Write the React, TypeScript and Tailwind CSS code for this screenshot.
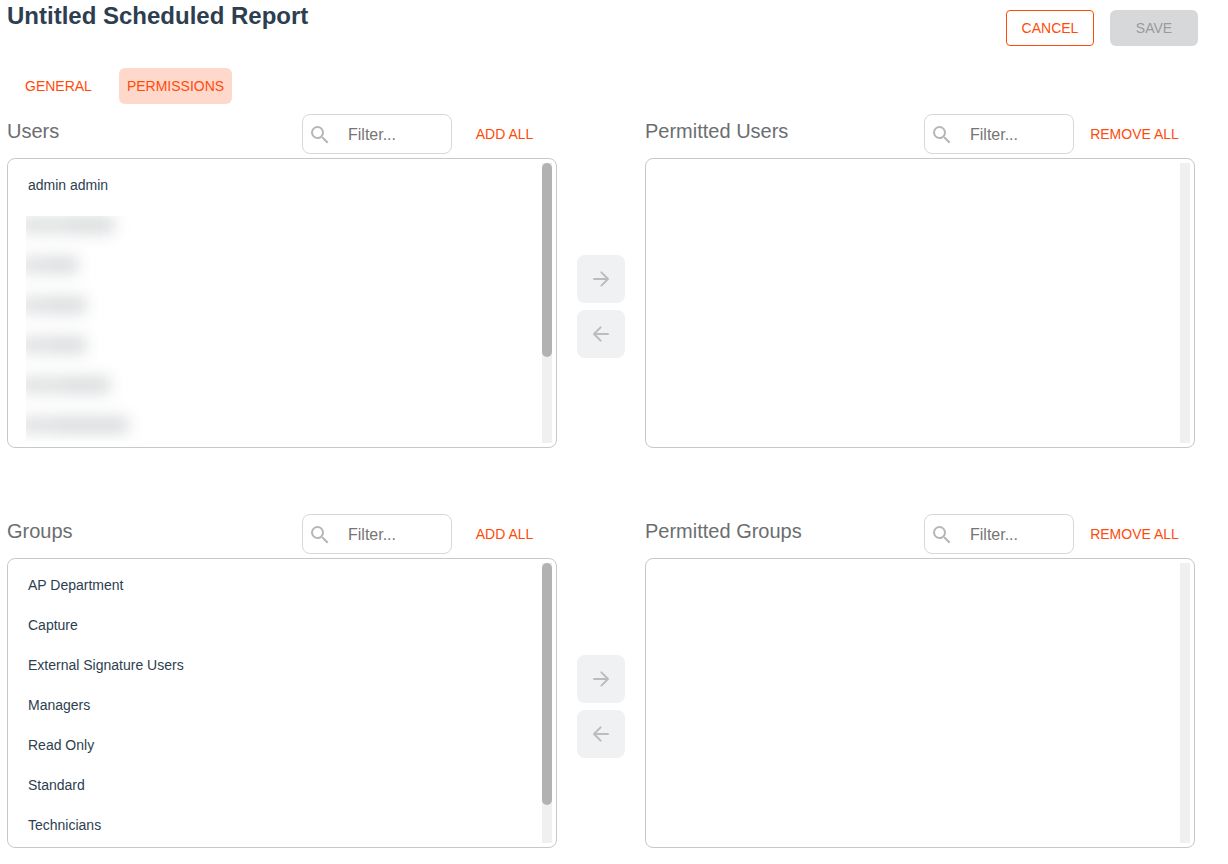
import { MdSearch } from 'react-icons/md';

const hiddenUsers = [
  ['w-[50px]', 'w-[44px]'],
  ['w-[28px]', 'w-[30px]'],
  ['w-[28px]', 'w-[38px]'],
  ['w-[32px]', 'w-[34px]'],
  ['w-[44px]', 'w-[46px]'],
  ['w-[36px]', 'w-[72px]'],
];
const groups = ['AP Department', 'Capture', 'External Signature Users', 'Managers', 'Read Only', 'Standard', 'Technicians'];

function Arrow({ back = false }: { back?: boolean }) {
  return (
    <svg
      width="24"
      height="24"
      viewBox="0 0 24 24"
      fill="none"
      stroke="currentColor"
      strokeWidth="2"
      strokeLinecap="round"
      strokeLinejoin="round"
      aria-hidden="true"
    >
      {back ? <path d="M19 12H5M11.6 5.4L5 12l6.6 6.6" /> : <path d="M5 12h14M12.4 5.4L19 12l-6.6 6.6" />}
    </svg>
  );
}

type PanelProps = {
  title: string;
  action: string;
  actionWidth: string;
  thumb?: string;
  children?: React.ReactNode;
};

function Panel({ title, action, actionWidth, thumb, children }: PanelProps) {
  return (
    <section className="min-w-0">
      <div className="flex h-10 items-center">
        <h2 className="flex-1 pb-1.5 text-xl leading-7 text-[#6b6e70]">{title}</h2>
        <label className="flex h-10 w-[150px] items-center rounded-lg border border-[#d5d7d9] pt-0.5 pl-[5px]">
          <MdSearch className="size-6 shrink-0 text-[#b4b7b9]" />
          <input
            type="text"
            aria-label={`Filter ${title}`}
            placeholder="Filter..."
            className="ml-4 w-full min-w-0 bg-transparent text-base text-[#2c3e50] outline-none placeholder:text-[#757575]"
          />
        </label>
        <button type="button" className={`h-9 text-sm text-[#ff4b0a] ${actionWidth}`}>
          {action}
        </button>
      </div>
      <div className="mt-1 flex h-[290px] rounded-lg border border-[#c6c8c9] p-1">
        <div className="min-w-0 flex-1 overflow-hidden pt-0.5">{children}</div>
        <div className="w-2.5 bg-[#f0f0f0]">{thumb && <div className={`rounded-full bg-[#b2b2b2] ${thumb}`} />}</div>
      </div>
    </section>
  );
}

function Item({ children }: { children: React.ReactNode }) {
  return <li className="flex h-10 items-center px-4 text-sm text-[#2c3e50]">{children}</li>;
}

function MoveButtons({ kind }: { kind: string }) {
  const style = 'flex size-12 items-center justify-center rounded-lg bg-[#f0f1f3] text-[#bbbcbe]';
  return (
    <div className="flex flex-col gap-[7px] pt-[141px]">
      <button type="button" disabled aria-label={`Permit selected ${kind}`} className={style}>
        <Arrow />
      </button>
      <button type="button" disabled aria-label={`Remove selected ${kind}`} className={style}>
        <Arrow back />
      </button>
    </div>
  );
}

export default function App() {
  return (
    <main className="bg-white pr-[33px] pb-4 pl-[7px] font-['Liberation_Sans',Arial,sans-serif]">
      <header className="-mr-[3px] flex items-start justify-between">
        <h1 className="text-2xl font-bold text-[#2c3e50]">Untitled Scheduled Report</h1>
        <div className="flex gap-4 pt-2.5">
          <button type="button" className="h-9 w-[88px] rounded border border-[#ff4b0a] text-sm text-[#ff4b0a]">
            CANCEL
          </button>
          <button type="button" disabled className="h-9 w-[88px] rounded-md bg-[#d7d8da] text-sm text-[#999b9d]">
            SAVE
          </button>
        </div>
      </header>

      <nav className="mt-[22px] flex gap-[19px] pl-2.5">
        <button type="button" className="h-9 rounded-md px-2 text-sm text-[#ff4b0a]">
          GENERAL
        </button>
        <button type="button" aria-current="page" className="h-9 rounded-md bg-[#ffd8cc] px-2 text-sm text-[#ff4b0a]">
          PERMISSIONS
        </button>
      </nav>

      <div className="mt-2.5 grid grid-cols-[minmax(0,1fr)_48px_minmax(0,1fr)] gap-x-5 gap-y-[66px]">
        <Panel title="Users" action="ADD ALL" actionWidth="w-[105px]" thumb="h-[194px]">
          <ul>
            <Item>admin admin</Item>
          </ul>
          <div className="mt-[11px] ml-3.5 h-[225px] w-40 overflow-hidden" aria-hidden="true">
            <div className="-mt-[11px] -ml-1.5 blur-[8px]">
              {hiddenUsers.map(([first, last], i) => (
                <div key={i} className="flex h-10 items-center">
                  <div className={`h-4 bg-[#dcdedf] ${first}`} />
                  <div className={`h-4 bg-[#d6d9da] ${last}`} />
                </div>
              ))}
            </div>
          </div>
        </Panel>
        <MoveButtons kind="users" />
        <Panel title="Permitted Users" action="REMOVE ALL" actionWidth="w-[121px]" />

        <Panel title="Groups" action="ADD ALL" actionWidth="w-[105px]" thumb="h-[242px]">
          <ul>
            {groups.map((group) => (
              <Item key={group}>{group}</Item>
            ))}
          </ul>
        </Panel>
        <MoveButtons kind="groups" />
        <Panel title="Permitted Groups" action="REMOVE ALL" actionWidth="w-[121px]" />
      </div>
    </main>
  );
}
